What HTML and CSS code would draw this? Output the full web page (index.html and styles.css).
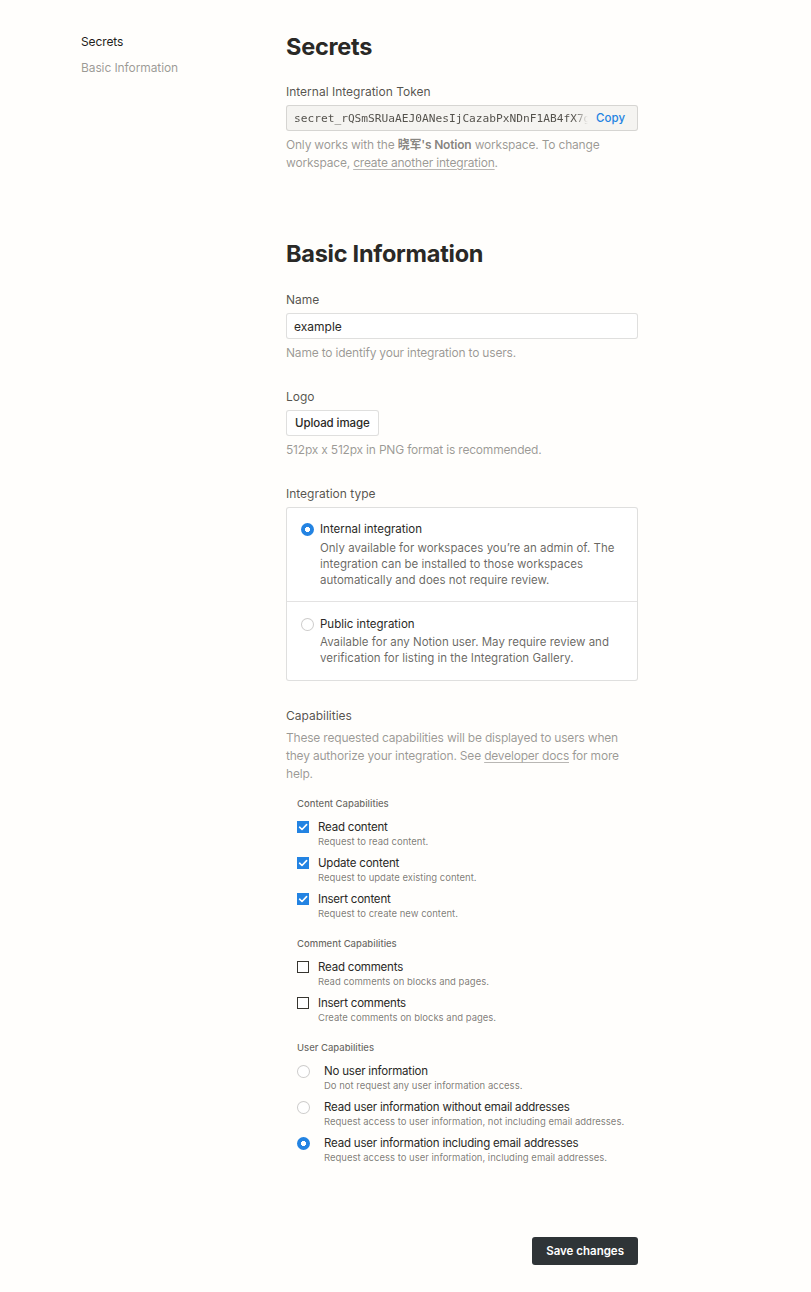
FILE: index.html
```html
<!DOCTYPE html>
<html lang="en">
<head>
<meta charset="utf-8">
<title>Integration settings</title>
<link rel="stylesheet" href="styles.css">
</head>
<body>
<div class="page">
  <nav class="sidebar">
    <a class="nav-item active">Secrets</a>
    <a class="nav-item">Basic Information</a>
  </nav>
  <main class="main">
    <section class="section">
      <h1 class="heading">Secrets</h1>
      <div class="field">
        <div class="label">Internal Integration Token</div>
        <div class="token">
          <span class="token-value">secret_rQSmSRUaAEJ0ANesIjCazabPxNDnF1AB4fX7g</span>
          <span class="copy">Copy</span>
        </div>
        <p class="help">Only works with the <b class="strong">晓军's Notion</b> workspace. To change<br>workspace, <span class="link">create another integration</span>.</p>
      </div>
    </section>

    <section class="section section-basic">
      <h2 class="heading">Basic Information</h2>
      <div class="field">
        <div class="label">Name</div>
        <div class="input">example</div>
        <p class="help">Name to identify your integration to users.</p>
      </div>
      <div class="field">
        <div class="label">Logo</div>
        <div><span class="button">Upload image</span></div>
        <p class="help">512px x 512px in PNG format is recommended.</p>
      </div>
      <div class="field">
        <div class="label">Integration type</div>
        <div class="type-box">
          <div class="type-item">
            <span class="radio checked"></span>
            <div class="type-text">
              <div class="type-title">Internal integration</div>
              <div class="type-desc">Only available for workspaces you’re an admin of. The integration can be installed to those workspaces automatically and does not require review.</div>
            </div>
          </div>
          <div class="type-item">
            <span class="radio"></span>
            <div class="type-text">
              <div class="type-title">Public integration</div>
              <div class="type-desc">Available for any Notion user. May require review and verification for listing in the Integration Gallery.</div>
            </div>
          </div>
        </div>
      </div>
      <div class="field">
        <div class="label">Capabilities</div>
        <p class="help help-caps">These requested capabilities will be displayed to users when<br>they authorize your integration. See <span class="link">developer docs</span> for more<br>help.</p>
        <div class="cap-groups">
          <div class="cap-group">
            <div class="cap-head">Content Capabilities</div>
            <div class="cap-item">
              <span class="check checked"><svg viewBox="0 0 12 12" width="12" height="12"><path d="M2.6 6.2 L5 8.5 L9.6 3.6" fill="none" stroke="#fff" stroke-width="1.6" stroke-linecap="round" stroke-linejoin="round"/></svg></span>
              <div><div class="cap-title">Read content</div><div class="cap-desc">Request to read content.</div></div>
            </div>
            <div class="cap-item">
              <span class="check checked"><svg viewBox="0 0 12 12" width="12" height="12"><path d="M2.6 6.2 L5 8.5 L9.6 3.6" fill="none" stroke="#fff" stroke-width="1.6" stroke-linecap="round" stroke-linejoin="round"/></svg></span>
              <div><div class="cap-title">Update content</div><div class="cap-desc">Request to update existing content.</div></div>
            </div>
            <div class="cap-item">
              <span class="check checked"><svg viewBox="0 0 12 12" width="12" height="12"><path d="M2.6 6.2 L5 8.5 L9.6 3.6" fill="none" stroke="#fff" stroke-width="1.6" stroke-linecap="round" stroke-linejoin="round"/></svg></span>
              <div><div class="cap-title">Insert content</div><div class="cap-desc">Request to create new content.</div></div>
            </div>
          </div>
          <div class="cap-group">
            <div class="cap-head">Comment Capabilities</div>
            <div class="cap-item">
              <span class="check"></span>
              <div><div class="cap-title">Read comments</div><div class="cap-desc">Read comments on blocks and pages.</div></div>
            </div>
            <div class="cap-item">
              <span class="check"></span>
              <div><div class="cap-title">Insert comments</div><div class="cap-desc">Create comments on blocks and pages.</div></div>
            </div>
          </div>
          <div class="cap-group">
            <div class="cap-head">User Capabilities</div>
            <div class="cap-item user">
              <span class="radio"></span>
              <div><div class="cap-title">No user information</div><div class="cap-desc">Do not request any user information access.</div></div>
            </div>
            <div class="cap-item user">
              <span class="radio"></span>
              <div><div class="cap-title">Read user information without email addresses</div><div class="cap-desc">Request access to user information, not including email addresses.</div></div>
            </div>
            <div class="cap-item user">
              <span class="radio checked"></span>
              <div><div class="cap-title">Read user information including email addresses</div><div class="cap-desc">Request access to user information, including email addresses.</div></div>
            </div>
          </div>
        </div>
      </div>
      <div class="actions">
        <span class="save">Save changes</span>
      </div>
    </section>
  </main>
</div>
</body>
</html>
```
FILE: styles.css
```css
* { box-sizing: border-box; }
html, body {
  margin: 0;
  padding: 0;
  background: #fffefc;
}
body {
  font-family: Inter, "Noto Sans CJK SC", sans-serif;
  color: rgb(55, 53, 47);
  -webkit-font-smoothing: antialiased;
}
.page {
  display: flex;
  padding: 32px 0 26px 81px;
}
.sidebar {
  width: 205px;
  flex: none;
  display: flex;
  flex-direction: column;
  gap: 8px;
  padding-top: 1px;
}
.nav-item {
  font-size: 12px;
  line-height: 18px;
  letter-spacing: -0.1px;
  color: rgba(55, 53, 47, 0.5);
}
.nav-item.active {
  color: #1f1e1b;
}
.main {
  width: 352px;
  flex: none;
}
.heading {
  margin: 0 0 22px;
  font-size: 23.5px;
  line-height: 29px;
  font-weight: 700;
  color: #2a2926;
  letter-spacing: -0.25px;
}
.section-basic {
  margin-top: 67px;
}
.section-basic .heading {
  margin-bottom: 23px;
}
.field + .field {
  margin-top: 26px;
}
.label {
  font-size: 12px;
  line-height: 18px;
  color: rgba(55, 53, 47, 0.85);
  margin-bottom: 4px;
}
.help {
  margin: 5px 0 0;
  font-size: 12px;
  line-height: 18px;
  letter-spacing: -0.2px;
  color: rgba(55, 53, 47, 0.5);
}
.help-caps {
  margin-top: 2px;
}
.strong {
  font-weight: 600;
  color: rgba(55, 53, 47, 0.62);
}
.link {
  text-decoration: underline;
  text-decoration-color: rgba(55, 53, 47, 0.35);
  text-underline-offset: 2px;
}
.token {
  display: flex;
  align-items: center;
  height: 26px;
  border: 1px solid rgba(55, 53, 47, 0.16);
  border-radius: 3px;
  background: #f5f4f1;
  padding: 0 12px 0 7px;
}
.token-value {
  flex: 1;
  min-width: 0;
  overflow: hidden;
  white-space: nowrap;
  font-family: "DejaVu Sans Mono", monospace;
  font-size: 11.2px;
  color: rgba(55, 53, 47, 0.85);
  -webkit-mask-image: linear-gradient(to right, #000 calc(100% - 14px), transparent);
  mask-image: linear-gradient(to right, #000 calc(100% - 14px), transparent);
}
.copy {
  flex: none;
  margin-left: 8px;
  font-size: 11.5px;
  font-weight: 500;
  color: #2383e2;
}
.input {
  height: 26px;
  display: flex;
  align-items: center;
  padding: 0 7px;
  border: 1px solid rgba(55, 53, 47, 0.16);
  border-radius: 3px;
  background: #fff;
  font-size: 12px;
  color: #2a2926;
}
.button {
  display: inline-flex;
  align-items: center;
  height: 26px;
  padding: 0 8px;
  border: 1px solid rgba(55, 53, 47, 0.16);
  border-radius: 3px;
  background: #fff;
  font-size: 11.5px;
  font-weight: 500;
  letter-spacing: -0.1px;
  color: #2a2926;
}
.type-box {
  border: 1px solid rgba(55, 53, 47, 0.16);
  border-radius: 3px;
  background: #fff;
}
.type-item {
  display: flex;
  gap: 6px;
  padding: 13px 14px 13px;
}
.type-item + .type-item {
  border-top: 1px solid rgba(55, 53, 47, 0.14);
  padding-top: 14px;
  padding-bottom: 14px;
}
.type-item + .type-item .type-desc {
  margin-top: 2px;
}
.type-item .radio {
  margin-top: 2px;
}
.type-title {
  font-size: 11.5px;
  line-height: 16px;
  color: #2a2926;
}
.type-desc {
  margin-top: 3px;
  font-size: 11.5px;
  line-height: 16px;
  color: rgba(55, 53, 47, 0.75);
}
.radio {
  flex: none;
  width: 13px;
  height: 13px;
  border-radius: 50%;
  border: 1px solid rgba(55, 53, 47, 0.25);
  background: #fff;
}
.radio.checked {
  border: none;
  background: radial-gradient(circle, #fff 0 2.3px, #2383e2 2.8px);
}
.cap-groups {
  padding-left: 11px;
  margin-top: 14px;
}
.cap-group + .cap-group {
  margin-top: 16px;
}
.cap-head {
  font-size: 9.5px;
  line-height: 14px;
  color: rgba(55, 53, 47, 0.75);
  font-weight: 500;
  margin-bottom: 8px;
}
.cap-item {
  display: flex;
  gap: 9px;
  align-items: flex-start;
}
.cap-item + .cap-item {
  margin-top: 6px;
}
.cap-item.user {
  gap: 14px;
}
.cap-item.user .radio {
  margin-top: 2px;
}
.check {
  flex: none;
  width: 12px;
  height: 12px;
  margin-top: 2px;
  border: 1.5px solid #37352f;
  background: #fff;
  display: flex;
  align-items: center;
  justify-content: center;
}
.check.checked {
  border: none;
  background: #2383e2;
}
.cap-title {
  font-size: 11.5px;
  line-height: 16px;
  letter-spacing: -0.2px;
  color: #2a2926;
}
.cap-desc {
  font-size: 9.5px;
  line-height: 14px;
  color: rgba(55, 53, 47, 0.65);
}
.actions {
  display: flex;
  justify-content: flex-end;
  margin-top: 72px;
}
.save {
  display: inline-flex;
  align-items: center;
  height: 28px;
  padding: 0 14px;
  border-radius: 3px;
  background: #2f3437;
  color: #fff;
  font-size: 11.5px;
  font-weight: 600;
}
```
